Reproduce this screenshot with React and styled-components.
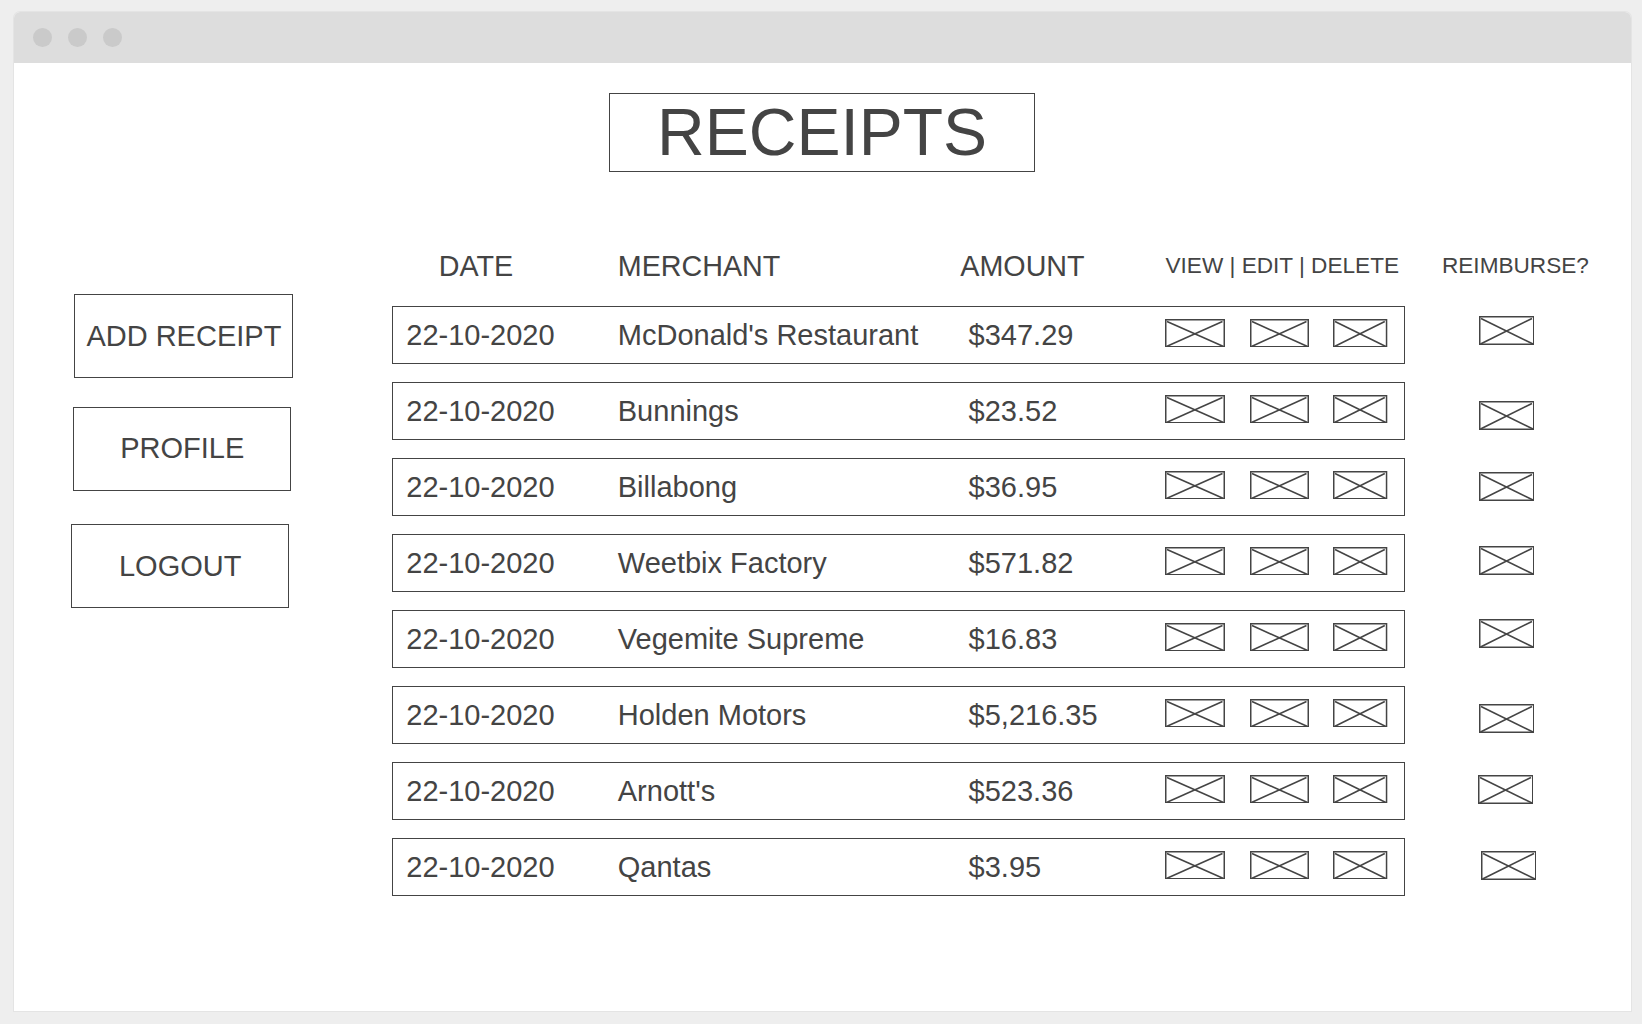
import React from "react";
import styled, { createGlobalStyle } from "styled-components";

const GlobalStyle = createGlobalStyle`
	html, body {
		margin: 0;
		padding: 0;
		background: #eeeeee;
	}
	body {
		font-family: "Liberation Sans", Arial, sans-serif;
		color: #444444;
	}
`;

const Page = styled.div`
	height: 1024px;
	box-sizing: border-box;
	padding: 11.5px 0 0 13.6px;
`;

const Window = styled.div`
	width: 1617px;
	height: 999px;
	background: #fff;
	border-radius: 6px 6px 0 0;
	box-shadow: 0 0 0 1px #e4e4e4;
	overflow: hidden;
	display: flex;
	flex-direction: column;
`;

const TitleBar = styled.div`
	height: 51.5px;
	background: #dddddd;
	display: flex;
	align-items: center;
	gap: 16px;
	padding-left: 19px;
`;

const Dot = styled.span`
	width: 19px;
	height: 19px;
	border-radius: 50%;
	background: #cacaca;
`;

const Content = styled.div`
	flex: 1;
	display: flex;
	flex-direction: column;
`;

const Title = styled.h1`
	align-self: center;
	margin: 30px 0 0;
	width: 426px;
	height: 78.5px;
	box-sizing: border-box;
	border: 1px solid #444;
	display: flex;
	align-items: center;
	justify-content: center;
	font-size: 66px;
	font-weight: normal;
	color: #444;
`;

const Main = styled.div`
	display: flex;
	margin-top: 64.5px;
`;

const Sidebar = styled.nav`
	width: 378px;
	display: flex;
	flex-direction: column;
	align-items: flex-start;
	padding-top: 58.3px;
`;

const SideButton = styled.button`
	width: ${(p) => p.$w}px;
	height: 84px;
	margin-left: ${(p) => p.$x}px;
	margin-top: ${(p) => p.$y}px;
	box-sizing: border-box;
	border: 1px solid #444;
	background: #fff;
	font-family: inherit;
	font-size: 29px;
	color: #444;
	padding: 0;
`;

const Table = styled.section`
	display: flex;
	flex-direction: column;
`;

const HeaderRow = styled.div`
	height: 60px;
	display: grid;
	grid-template-columns: 226.2px 342.5px 205.2px 276.5px auto;
	align-items: center;
	margin-bottom: 9.8px;
`;

const HeadCell = styled.div`
	font-size: ${(p) => (p.$small ? "22.6px" : "28.7px")};
	padding-left: ${(p) => p.$indent || 0}px;
	white-space: nowrap;
`;

const RowList = styled.div`
	display: flex;
	flex-direction: column;
	gap: 17.5px;
`;

const Line = styled.div`
	display: flex;
	align-items: flex-start;
`;

const RowBox = styled.div`
	width: 1013.8px;
	height: 58.5px;
	box-sizing: border-box;
	border: 1px solid #444;
	padding-left: 13.7px;
	display: flex;
	align-items: center;
	font-size: 29px;
`;

const Cell = styled.div`
	width: ${(p) => p.$w}px;
	white-space: nowrap;
`;

const Actions = styled.div`
	align-self: flex-start;
	padding-top: 12px;
	display: flex;
	gap: 24.7px;
`;

const ReimburseCell = styled.div`
	padding-left: ${(p) => 73.6 + p.$x}px;
	padding-top: ${(p) => p.$y}px;
`;

const Placeholder = ({ w, h = 28.5 }) => (
	<svg width={w} height={h} viewBox={`0 0 ${w} ${h}`} style={{ display: "block" }}>
		<rect x="0.75" y="0.75" width={w - 1.5} height={h - 1.5} fill="none" stroke="#444" strokeWidth="1.5" />
		<line x1="2" y1="2.5" x2={w - 1.5} y2={h - 1} stroke="#444" strokeWidth="1.6" />
		<line x1="1.5" y1={h - 1} x2={w - 2.5} y2="2.5" stroke="#444" strokeWidth="1.6" />
	</svg>
);

const receipts = [
	{ merchant: "McDonald's Restaurant", amount: "$347.29", ry: 10.5, rx: 0 },
	{ merchant: "Bunnings", amount: "$23.52", ry: 19.3, rx: 0 },
	{ merchant: "Billabong", amount: "$36.95", ry: 14.5, rx: 0 },
	{ merchant: "Weetbix Factory", amount: "$571.82", ry: 11.8, rx: 0 },
	{ merchant: "Vegemite Supreme", amount: "$16.83", ry: 9.1, rx: 0 },
	{ merchant: "Holden Motors", amount: "$5,216.35", ry: 17.9, rx: 0 },
	{ merchant: "Arnott's", amount: "$523.36", ry: 13.1, rx: -1 },
	{ merchant: "Qantas", amount: "$3.95", ry: 13.6, rx: 2 },
];

const App = () => {
	return (
		<Page>
			<GlobalStyle />
			<Window>
				<TitleBar>
					<Dot />
					<Dot />
					<Dot />
				</TitleBar>
				<Content>
					<Title>RECEIPTS</Title>
					<Main>
						<Sidebar>
							<SideButton $w={219} $x={60.8} $y={0}>ADD RECEIPT</SideButton>
							<SideButton $w={218} $x={59.7} $y={28.3}>PROFILE</SideButton>
							<SideButton $w={218} $x={57.6} $y={33.5}>LOGOUT</SideButton>
						</Sidebar>
						<Table>
							<HeaderRow>
								<HeadCell $indent={47.2}>DATE</HeadCell>
								<HeadCell>MERCHANT</HeadCell>
								<HeadCell>AMOUNT</HeadCell>
								<HeadCell $small>VIEW | EDIT | DELETE</HeadCell>
								<HeadCell $small>REIMBURSE?</HeadCell>
							</HeaderRow>
							<RowList>
								{receipts.map(({ merchant, amount, ry, rx }) => (
									<Line key={merchant}>
										<RowBox>
											<Cell $w={211.5}>22-10-2020</Cell>
											<Cell $w={350.8}>{merchant}</Cell>
											<Cell $w={196.4}>{amount}</Cell>
											<Actions>
												<Placeholder w={60} />
												<Placeholder w={59} />
												<Placeholder w={54.3} />
											</Actions>
										</RowBox>
										<ReimburseCell $x={rx} $y={ry}>
											<Placeholder w={55.5} h={29} />
										</ReimburseCell>
									</Line>
								))}
							</RowList>
						</Table>
					</Main>
				</Content>
			</Window>
		</Page>
	);
};

export default App;
